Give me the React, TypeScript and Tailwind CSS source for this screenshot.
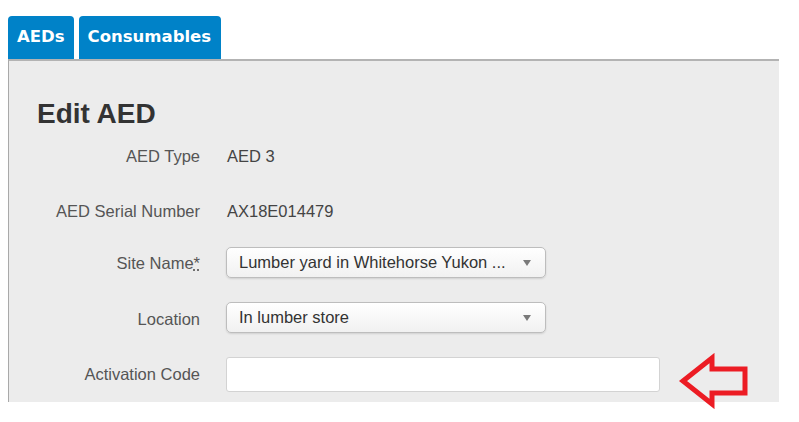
import React from 'react';

const rows = [
  { label: 'AED Type', value: 'AED 3', mt: 'mt-[9px]' },
  { label: 'AED Serial Number', value: 'AX18E014479', mt: 'mt-[20px]' },
];

const SelectBox: React.FC<{ text: string }> = ({ text }) => (
  <div className="w-[320px] h-[31px] flex items-center justify-between pl-[12px] pr-[14px] rounded-[5px] border border-[#bdbdbd] bg-gradient-to-b from-white to-[#f1f1f1] shadow-[0_1px_2px_rgba(0,0,0,0.12)] text-[#333]">
    <span className="whitespace-nowrap">{text}</span>
    <span className="w-0 h-0 border-l-[4px] border-r-[4px] border-t-[6px] border-l-transparent border-r-transparent border-t-[#7a7a7a]" />
  </div>
);

export default function App() {
  return (
    <div className="w-[799px] h-[422px] bg-white pl-[8px] pt-[16px] font-['Liberation_Sans',Arial,sans-serif] overflow-hidden">
      {/* Tabs */}
      <div className="flex gap-[5px] h-[43px] font-['DejaVu_Sans',Verdana,sans-serif] font-bold text-[16.5px] text-white">
        <div className="px-[9px] flex items-center bg-[#0082c8] rounded-t-[4px]">AEDs</div>
        <div className="pl-[9px] pr-[10px] flex items-center bg-[#0082c8] rounded-t-[4px]">Consumables</div>
      </div>

      <div className="w-[771px] h-[343px] bg-[#ececec] border-t-2 border-l border-t-[#b3b3b3] border-l-[#a9a9a9] pt-[37px]">
        <h1 className="pl-[28px] h-[32px] leading-[32px] text-[28px] font-bold text-[#333]">Edit AED</h1>

        <div className="text-[16.5px]">
          {rows.map((r) => (
            <div key={r.label} className={`flex items-center h-[35px] ${r.mt}`}>
              <div className="w-[191px] text-right text-[#555]">{r.label}</div>
              <div className="ml-[27px] text-[#444]">{r.value}</div>
            </div>
          ))}

          <div className="flex items-center h-[35px] mt-[16px]">
            <div className="w-[191px] text-right text-[#555] pt-[2px]">
              Site Name<abbr className="underline decoration-dotted">*</abbr>
            </div>
            <div className="ml-[26px]">
              <SelectBox text="Lumber yard in Whitehorse Yukon ..." />
            </div>
          </div>

          <div className="flex items-center h-[35px] mt-[20px]">
            <div className="w-[191px] text-right text-[#555] pt-[3px]">Location</div>
            <div className="ml-[26px]">
              <SelectBox text="In lumber store" />
            </div>
          </div>

          <div className="flex items-center h-[35px] mt-[22px]">
            <div className="w-[191px] text-right text-[#555]">Activation Code</div>
            <div className="ml-[26px] w-[434px] h-[35px] rounded-[3px] border border-[#d3d3d3] bg-white" />
            <svg width="74" height="56" viewBox="0 0 74 56" className="ml-[16px] self-start -mt-[4px]">
              <path
                d="M7 28 L36 5 L36 16 L69 16 L69 40 L36 40 L36 51 Z"
                fill="none"
                stroke="#ec1c24"
                strokeWidth="5"
                strokeLinejoin="miter"
              />
            </svg>
          </div>
        </div>
      </div>
    </div>
  );
}
